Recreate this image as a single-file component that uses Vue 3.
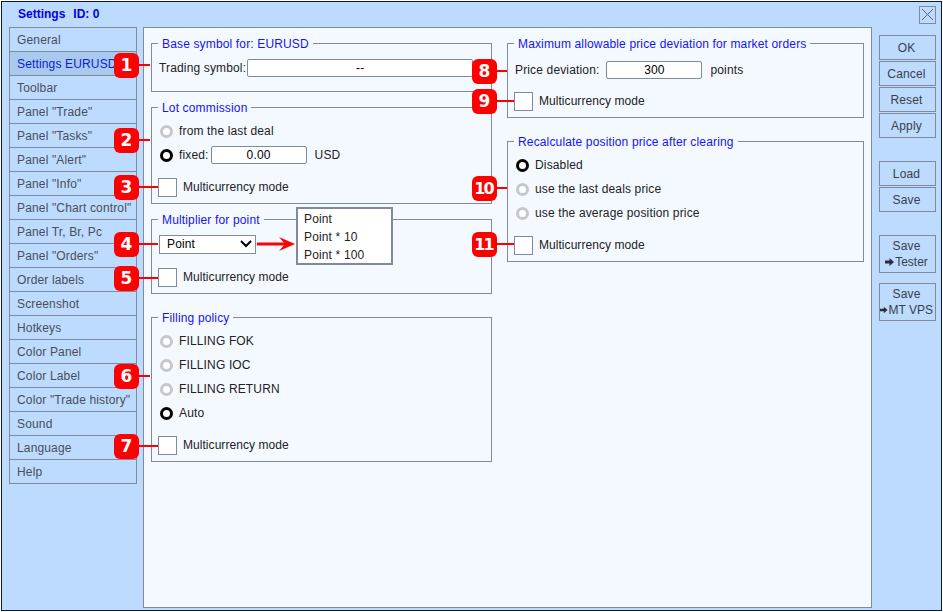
<template>
  <div class="page">
    <div class="window">
      <div class="titlebar">
        <span class="title">Settings</span>
        <span class="title">ID: 0</span>
        <button class="close">
          <svg width="15" height="15" viewBox="0 0 15 15"><path d="M2 2 L13 13 M13 2 L2 13" stroke="#5c6670" stroke-width="1" fill="none" /></svg>
        </button>
      </div>

      <div class="body">
        <ul class="tabs">
          <li v-for="tab in tabs" :key="tab" :class="{ active: tab === 'Settings EURUSD' }">{{ tab }}</li>
        </ul>

        <div class="panel">
          <div class="col col-left">
            <section class="group g-base">
              <span class="legend">Base symbol for: EURUSD</span>
              <div class="row">
                <span>Trading symbol:</span>
                <div class="field field-symbol">--</div>
              </div>
            </section>

            <section class="group g-lot">
              <span class="legend">Lot commission</span>
              <div class="row"><i class="radio"></i>from the last deal</div>
              <div class="row">
                <i class="radio on"></i>fixed:
                <div class="field field-lot">0.00</div>
                <span class="unit">USD</span>
              </div>
              <div class="row check-row"><i class="check"></i>Multicurrency mode</div>
            </section>

            <section class="group g-mult">
              <span class="legend">Multiplier for point</span>
              <div class="row">
                <div class="select">
                  Point
                  <svg width="12" height="8" viewBox="0 0 12 8"><path d="M1 1 L6 6 L11 1" stroke="#000" stroke-width="2" fill="none" /></svg>
                </div>
              </div>
              <div class="row check-row mult-check"><i class="check"></i>Multicurrency mode</div>
              <svg class="arrow" width="40" height="16" viewBox="0 0 40 16"><path d="M0 8 H30" stroke="#f00" stroke-width="3" /><path d="M22 1 L38 8 L22 15 L28 8 Z" fill="#f00" /></svg>
              <div class="options">
                <div>Point</div>
                <div>Point * 10</div>
                <div>Point * 100</div>
              </div>
            </section>

            <section class="group g-fill">
              <span class="legend">Filling policy</span>
              <div class="row"><i class="radio"></i>FILLING FOK</div>
              <div class="row"><i class="radio"></i>FILLING IOC</div>
              <div class="row"><i class="radio"></i>FILLING RETURN</div>
              <div class="row"><i class="radio on"></i>Auto</div>
              <div class="row check-row"><i class="check"></i>Multicurrency mode</div>
            </section>
          </div>

          <div class="col col-right">
            <section class="group g-dev">
              <span class="legend">Maximum allowable price deviation for market orders</span>
              <div class="row">
                <span>Price deviation:</span>
                <div class="field field-dev">300</div>
                <span class="unit">points</span>
              </div>
              <div class="row check-row dev-check"><i class="check"></i>Multicurrency mode</div>
            </section>

            <section class="group g-recalc">
              <span class="legend">Recalculate position price after clearing</span>
              <div class="row"><i class="radio on"></i>Disabled</div>
              <div class="row"><i class="radio"></i>use the last deals price</div>
              <div class="row"><i class="radio"></i>use the average position price</div>
              <div class="row check-row"><i class="check"></i>Multicurrency mode</div>
            </section>
          </div>
        </div>

        <div class="actions">
          <div class="btn-set">
            <button class="btn">OK</button>
            <button class="btn">Cancel</button>
            <button class="btn">Reset</button>
            <button class="btn">Apply</button>
          </div>
          <div class="btn-set">
            <button class="btn">Load</button>
            <button class="btn">Save</button>
          </div>
          <div class="btn-set tall-set">
            <button class="btn tall">
              Save
              <span class="sub">
                <svg width="9" height="8" viewBox="0 0 9 8"><path d="M0 2.5 H4.5 V0 L9 4 L4.5 8 V5.5 H0 Z" fill="#2a2f36" /></svg>
                Tester
              </span>
            </button>
            <button class="btn tall">
              Save
              <span class="sub">
                <svg width="9" height="8" viewBox="0 0 9 8"><path d="M0 2.5 H4.5 V0 L9 4 L4.5 8 V5.5 H0 Z" fill="#2a2f36" /></svg>
                MT VPS
              </span>
            </button>
          </div>
        </div>
      </div>
    </div>

    <div
      v-for="b in badges"
      :key="b.n"
      class="badge"
      :style="{ left: b.x + 'px', top: b.y + 'px' }"
    >
      <span :class="{ wide: b.n > 9 }">{{ b.n }}</span>
      <i class="tail" :style="{ width: b.tail + 'px' }"></i>
    </div>
  </div>
</template>

<script setup>
const tabs = [
  'General',
  'Settings EURUSD',
  'Toolbar',
  'Panel "Trade"',
  'Panel "Tasks"',
  'Panel "Alert"',
  'Panel "Info"',
  'Panel "Chart control"',
  'Panel Tr, Br, Pc',
  'Panel "Orders"',
  'Order labels',
  'Screenshot',
  'Hotkeys',
  'Color Panel',
  'Color Label',
  'Color "Trade history"',
  'Sound',
  'Language',
  'Help'
]

const badges = [
  { n: 1, x: 114, y: 53, tail: 11 },
  { n: 2, x: 114, y: 128, tail: 11 },
  { n: 3, x: 114, y: 175, tail: 19 },
  { n: 4, x: 114, y: 232, tail: 19 },
  { n: 5, x: 114, y: 266, tail: 19 },
  { n: 6, x: 114, y: 364, tail: 11 },
  { n: 7, x: 114, y: 434, tail: 19 },
  { n: 8, x: 472, y: 59, tail: 10 },
  { n: 9, x: 472, y: 89, tail: 17 },
  { n: 10, x: 472, y: 176, tail: 10 },
  { n: 11, x: 472, y: 232, tail: 17 }
]
</script>

<style>
html,
body {
  margin: 0;
  background: #fff;
}
</style>

<style scoped>
.page {
  position: relative;
  width: 943px;
  height: 612px;
  padding: 1px;
  box-sizing: border-box;
  font-family: "Liberation Sans", Arial, sans-serif;
  font-size: 12px;
  letter-spacing: 0.15px;
  color: #222;
  overflow: hidden;
}

.window {
  height: 610px;
  box-sizing: border-box;
  border: 1px solid #0b1a33;
  background: #bcdbff;
}

.titlebar {
  display: flex;
  align-items: center;
  gap: 8px;
  height: 25px;
  padding: 0 5px 0 16px;
  position: relative;
}

.title {
  margin-top: -2px;
  color: #0000e6;
  font-weight: bold;
  letter-spacing: 0;
}

.close {
  margin-left: auto;
  width: 17px;
  height: 18px;
  padding: 0;
  border: 1px solid #7f8b99;
  background: transparent;
  display: flex;
  align-items: center;
  justify-content: center;
}

.body {
  display: flex;
  align-items: flex-start;
  padding-left: 7px;
}

.tabs {
  list-style: none;
  margin: 0;
  padding: 0;
  width: 128px;
}

.tabs li {
  height: 25px;
  box-sizing: border-box;
  margin-top: -1px;
  padding-left: 7px;
  line-height: 25px;
  border: 1px solid #7f8b99;
  color: #4a4f57;
  white-space: nowrap;
  overflow: hidden;
}

.tabs li:first-child {
  margin-top: 0;
}

.tabs li.active {
  background: #a9c9ee;
  color: #0a1ed2;
}

.panel {
  display: flex;
  gap: 15px;
  width: 729px;
  height: 581px;
  margin-left: 6px;
  padding: 15px 7px;
  box-sizing: border-box;
  border: 1px solid #7f8b99;
  background: #f4f9ff;
}

.col-left {
  width: 341px;
}

.col-right {
  width: 357px;
}

.group {
  position: relative;
  box-sizing: border-box;
  border: 1px solid #7f8b99;
  padding: 11px 7px 0;
}

.g-base { height: 49px; padding-top: 12px; }
.g-lot { height: 97px; margin-top: 15px; }
.g-mult { height: 75px; margin-top: 15px; padding-top: 12px; }
.g-fill { height: 145px; margin-top: 23px; }
.g-dev { height: 75px; padding-top: 14px; }
.g-recalc { height: 121px; margin-top: 23px; }

.legend {
  position: absolute;
  left: 6px;
  top: -7px;
  padding: 0 4px;
  line-height: 14px;
  background: #f4f9ff;
  color: #1414f0;
  white-space: nowrap;
}

.row {
  display: flex;
  align-items: center;
  height: 24px;
  white-space: nowrap;
}

.check-row {
  margin-top: 8px;
  letter-spacing: 0.05px;
}

.mult-check {
  margin-top: 9px;
}

.dev-check {
  margin-top: 7px;
}

.radio {
  width: 13px;
  height: 13px;
  box-sizing: border-box;
  margin: 0 6px 0 1px;
  border: 3px solid #c4c8cc;
  border-radius: 50%;
  background: #fff;
}

.radio.on {
  border-color: #000;
}

.check {
  width: 19px;
  height: 19px;
  box-sizing: border-box;
  margin: 0 6px 0 -1px;
  border: 1px solid #7f8b99;
  background: #fff;
}

.field {
  height: 18px;
  line-height: 16px;
  box-sizing: border-box;
  border: 1px solid #7f8b99;
  border-radius: 2px;
  background: #fff;
  color: #000;
  text-align: center;
}

.field-symbol {
  width: 226px;
  margin-left: 1px;
}

.field-lot {
  width: 96px;
  margin-left: 2px;
}

.field-dev {
  width: 96px;
  margin-left: 7px;
}

.unit {
  margin-left: 8px;
}

.select {
  display: flex;
  align-items: center;
  justify-content: space-between;
  width: 97px;
  height: 19px;
  box-sizing: border-box;
  padding: 0 3px 0 7px;
  border: 1px solid #7f8b99;
  background: #fff;
  color: #000;
}

.arrow {
  position: absolute;
  left: 105px;
  top: 16px;
}

.options {
  position: absolute;
  left: 144px;
  top: -13px;
  width: 97px;
  height: 58px;
  box-sizing: border-box;
  padding: 1px 6px;
  border: 2px solid #7f8b99;
  background: #fff;
  line-height: 18px;
}

.actions {
  width: 57px;
  margin-left: 7px;
  padding-top: 8px;
}

.btn-set {
  display: flex;
  flex-direction: column;
  gap: 1px;
  margin-bottom: 23px;
}

.tall-set {
  gap: 10px;
}

.btn {
  height: 25px;
  padding: 0 2px 0 0;
  border: 1px solid #7f8b99;
  background: #bcdbff;
  color: #3a4048;
  font: inherit;
  letter-spacing: inherit;
}

.tall {
  height: 38px;
  line-height: 16px;
}

.sub {
  display: flex;
  align-items: center;
  justify-content: center;
  gap: 1px;
  letter-spacing: 0;
  white-space: nowrap;
}

.badge {
  position: absolute;
  width: 25px;
  height: 25px;
  border-radius: 6px;
  background: #f00;
  color: #fff;
  font-family: "DejaVu Sans", sans-serif;
  font-weight: bold;
  font-size: 17px;
  letter-spacing: 0;
  line-height: 25px;
  text-align: center;
}

.wide {
  letter-spacing: -2px;
  margin-left: -2px;
  font-size: 16px;
}

.tail {
  position: absolute;
  left: 25px;
  top: 11px;
  height: 2px;
  background: #f00;
}
</style>
